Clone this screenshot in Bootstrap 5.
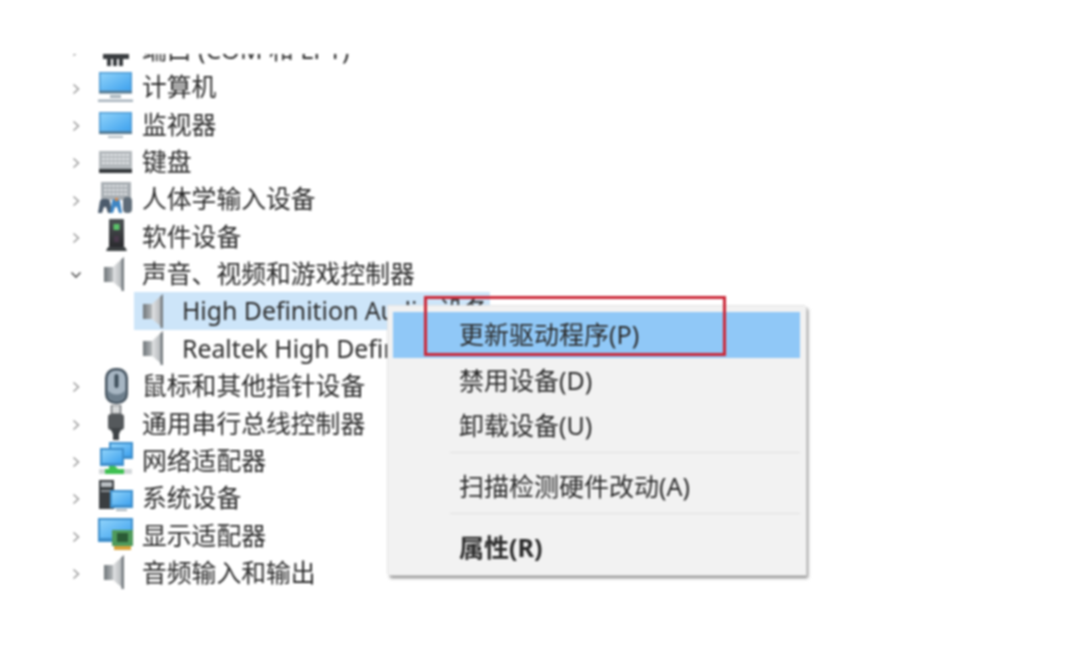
<!DOCTYPE html>
<html lang="zh-CN">
<head>
    <meta charset="UTF-8">
    <title>设备管理器</title>
    <link href="https://cdn.jsdelivr.net/npm/bootstrap@5.3.3/dist/css/bootstrap.min.css" rel="stylesheet">
    <style>
        body { background: #fff; color: #2b2b2b; font-family: "Noto Sans", "Noto Sans CJK SC", sans-serif; overflow: hidden; }
        .shot { width: 1080px; height: 647px; position: relative; overflow: hidden; filter: blur(0.8px); }
        .tree-clip { position: absolute; left: 0; top: 54px; width: 1080px; height: 560px; overflow: hidden; }
        .tree-list { margin-top: -23px; padding-left: 70px; }
        .tree-row { height: 37.35px; font-size: 24.8px; white-space: nowrap; }
        .tree-row.child { padding-left: 64px; }
        .row-inner { height: 100%; width: 356px; overflow: visible; }
        .row-inner.picked { background: #cde5f9; }
        .chev { width: 12px; height: 12px; flex: none; margin-right: 16px; margin-top: 3px; }
        .tree-icon { width: 36px; height: 36px; flex: none; margin-right: 8px; }
        .child .tree-icon { margin-left: 3px; margin-right: 9px; }
        .ctx-menu { position: absolute; left: 388px; top: 306px; width: 418px; height: 269px; background: #f2f2f2; box-shadow: -1px -1px 0 #e4e4e4, 1px 1px 0 #ccc, 2px 3px 3px #888; padding: 6px 6px 6px 5px; font-size: 25px; color: #2b2b2b; }
        .ctx-item { height: 45.5px; padding-left: 66px; }
        .ctx-item.hot { background: #90c8f7; }
        .ctx-sep { height: 1px; background: #e0e0e0; margin: 3.5px 0 11px 57px; }
        .ctx-bold { font-weight: 700; }
        .red-box { position: absolute; left: 424px; top: 296px; width: 302px; height: 60px; border: 3px solid #cb2838; }
    </style>
</head>
<body>
<div class="shot">
    <svg width="0" height="0" class="position-absolute">
        <defs>
            <linearGradient id="g-screen" x1="0" y1="0" x2="1" y2="1"><stop offset="0" stop-color="#8ed2fa"/><stop offset="1" stop-color="#3fa2ee"/></linearGradient>
            <linearGradient id="g-cone" x1="0" y1="0" x2="1" y2="0"><stop offset="0" stop-color="#e2e4e5"/><stop offset="1" stop-color="#a9adb0"/></linearGradient>
            <linearGradient id="g-box" x1="0" y1="0" x2="1" y2="0"><stop offset="0" stop-color="#6f7579"/><stop offset="1" stop-color="#b5b9bb"/></linearGradient>
            <linearGradient id="g-tower" x1="0" y1="0" x2="0" y2="1"><stop offset="0" stop-color="#4c5254"/><stop offset="1" stop-color="#2a2a2e"/></linearGradient>
            <symbol id="i-port" viewBox="0 0 36 36">
                <path d="M5 19h26v8h-6v7h-4v-7h-2v7h-4v-7h-2v7h-4v-7h-4z" fill="#3a3d40"/>
            </symbol>
            <symbol id="i-pc" viewBox="0 0 36 36">
                <rect x="1" y="3" width="33" height="21" fill="#4f9ad2"/>
                <rect x="2.500" y="4.500" width="30" height="17" fill="url(#g-screen)"/>
                <rect x="1" y="22" width="33" height="2.500" fill="#52768e"/>
                <rect x="12" y="26" width="11" height="3" fill="#a8b4bc"/>
                <rect x="0" y="30.500" width="35" height="2.500" fill="#a6b2bb"/>
            </symbol>
            <symbol id="i-monitor" viewBox="0 0 36 36">
                <rect x="1" y="6" width="33" height="22" fill="#4f9ad2"/>
                <rect x="2.500" y="7.500" width="30" height="17.500" fill="url(#g-screen)"/>
                <rect x="1" y="25.500" width="33" height="2.500" fill="#52768e"/>
                <rect x="10" y="30" width="15" height="1.800" fill="#a8b4bc"/>
            </symbol>
            <symbol id="i-kbd" viewBox="0 0 36 36">
                <rect x="1" y="7" width="33" height="22" fill="#b3b8bc"/>
                <path d="M4 11h27M4 15h27M4 19h27" stroke="#e3e6e8" stroke-width="2" stroke-dasharray="3 1"/>
                <rect x="1" y="25" width="33" height="4" fill="#34383b"/>
            </symbol>
            <symbol id="i-hid" viewBox="0 0 36 36">
                <rect x="3" y="1" width="30" height="18" fill="#a9afb4"/>
                <path d="M6 5h24M6 9h24M6 13h24" stroke="#dfe2e4" stroke-width="2" stroke-dasharray="3 1"/>
                <path d="M0 32l2-12c1-3 9-3 10 0l2 12h-4l-2-6H6l-2 6z" fill="#4c5b6c"/>
                <path d="M12 32l2-12c1-3 7-3 8 0l2 12h-3l-2-6h-2l-2 6z" fill="#3f86c4"/>
                <rect x="17" y="17" width="3" height="3" fill="#d98a4a"/>
                <rect x="25" y="16" width="9" height="16" rx="4" fill="#5f6c78"/>
            </symbol>
            <symbol id="i-soft" viewBox="0 0 36 36">
                <rect x="11" y="1" width="15" height="28" rx="1" fill="url(#g-tower)"/>
                <rect x="15.500" y="6" width="6" height="6" fill="#5cc26a"/>
                <rect x="16" y="18" width="5" height="6" fill="#4a3a4c"/>
                <path d="M10 29h17l2 4H8z" fill="#3c4042"/>
            </symbol>
            <symbol id="i-spk" viewBox="0 0 36 36">
                <rect x="6" y="11" width="9" height="15" fill="url(#g-box)"/>
                <path d="M15 11L26 1v34L15 26z" fill="url(#g-cone)"/>
                <path d="M26 1v34h-2.500V3.500z" fill="#777d81"/>
            </symbol>
            <symbol id="i-mouse" viewBox="0 0 36 36">
                <rect x="7" y="0" width="23" height="36" rx="10" fill="#44525e"/>
                <rect x="9.500" y="2.500" width="18" height="31" rx="8" fill="#a7b6c3"/>
                <path d="M9.500 22c5 6 13 6 18 0v3a9 9 0 0 1-18 0z" fill="#6e7f8d"/>
                <rect x="16.500" y="6" width="4" height="14" rx="2" fill="#3f4e5a"/>
            </symbol>
            <symbol id="i-usb" viewBox="0 0 36 36">
                <rect x="13.500" y="0" width="9" height="9" fill="#d8dadb" stroke="#6a6e71" stroke-width="1.500"/>
                <rect x="10" y="9" width="16" height="16" rx="3" fill="#55595c"/>
                <path d="M12 23h12l-3 6v6h-6v-6z" fill="#3f4346"/>
            </symbol>
            <symbol id="i-net" viewBox="0 0 36 36">
                <rect x="11" y="0" width="24" height="17" fill="#3e8fcc"/>
                <rect x="13" y="2" width="20" height="12" fill="url(#g-screen)"/>
                <rect x="2" y="6" width="24" height="18" fill="#3e8fcc"/>
                <rect x="4" y="8" width="20" height="13" fill="url(#g-screen)"/>
                <rect x="1" y="27" width="33" height="5" fill="#d4d8da"/>
                <path d="M11 24h6l3 3h6v5H7v-5h4z" fill="#3fc052"/>
            </symbol>
            <symbol id="i-sys" viewBox="0 0 36 36">
                <rect x="1" y="0" width="15" height="29" fill="#3a3e41"/>
                <rect x="3" y="2" width="11" height="5" fill="#b9bec2"/>
                <rect x="3" y="10" width="11" height="2" fill="#8d9296"/>
                <rect x="12" y="10" width="23" height="18" fill="#3e8fcc"/>
                <rect x="14" y="12" width="19" height="13" fill="url(#g-screen)"/>
                <rect x="18" y="29" width="11" height="2" fill="#a8b4bc"/>
            </symbol>
            <symbol id="i-gpu" viewBox="0 0 36 36">
                <rect x="0" y="1" width="35" height="24" fill="#3e8fcc"/>
                <rect x="2" y="3" width="31" height="18" fill="url(#g-screen)"/>
                <rect x="14" y="13" width="21" height="16" fill="#4f9a5c"/>
                <rect x="19" y="16" width="11" height="9" fill="#2b5b36"/>
                <rect x="16" y="29" width="17" height="4" fill="#d9a43c"/>
            </symbol>
            <symbol id="i-chev" viewBox="0 0 12 12"><path d="M3.500 1.500l5 4.500-5 4.500" fill="none" stroke="#9a9a9a" stroke-width="1.500"/></symbol>
            <symbol id="i-chevd" viewBox="0 0 12 12"><path d="M1.500 3.500l4.500 4.500 4.500-4.500" fill="none" stroke="#555" stroke-width="1.600"/></symbol>
        </defs>
    </svg>

    <div class="tree-clip">
        <div class="tree-list" id="tree"></div>
    </div>

    <div class="ctx-menu">
        <div class="ctx-item hot d-flex align-items-center">更新驱动程序(P)</div>
        <div class="ctx-item d-flex align-items-center">禁用设备(D)</div>
        <div class="ctx-item d-flex align-items-center">卸载设备(U)</div>
        <div class="ctx-sep"></div>
        <div class="ctx-item d-flex align-items-center">扫描检测硬件改动(A)</div>
        <div class="ctx-sep"></div>
        <div class="ctx-item ctx-bold d-flex align-items-center">属性(R)</div>
    </div>
    <div class="red-box"></div>
</div>

<script>
    // rows of the device tree
    const rows = [
        { icon: 'i-port', name: '端口 (COM 和 LPT)' },
        { icon: 'i-pc', name: '计算机' },
        { icon: 'i-monitor', name: '监视器' },
        { icon: 'i-kbd', name: '键盘' },
        { icon: 'i-hid', name: '人体学输入设备' },
        { icon: 'i-soft', name: '软件设备' },
        { icon: 'i-spk', name: '声音、视频和游戏控制器', open: true },
        { icon: 'i-spk', name: 'High Definition Audio 设备', child: true, picked: true },
        { icon: 'i-spk', name: 'Realtek High Definition Audio', child: true },
        { icon: 'i-mouse', name: '鼠标和其他指针设备' },
        { icon: 'i-usb', name: '通用串行总线控制器' },
        { icon: 'i-net', name: '网络适配器' },
        { icon: 'i-sys', name: '系统设备' },
        { icon: 'i-gpu', name: '显示适配器' },
        { icon: 'i-spk', name: '音频输入和输出' }
    ];

    document.getElementById('tree').innerHTML = rows.map(r => {
        if (r.child) {
            return `<div class="tree-row child d-flex align-items-center"><div class="row-inner d-flex align-items-center ${r.picked ? 'picked' : ''}"><svg class="tree-icon"><use href="#${r.icon}"/></svg><span>${r.name}</span></div></div>`;
        }
        return `<div class="tree-row d-flex align-items-center"><svg class="chev"><use href="#${r.open ? 'i-chevd' : 'i-chev'}"/></svg><svg class="tree-icon"><use href="#${r.icon}"/></svg><span>${r.name}</span></div>`;
    }).join('');
</script>
<script src="https://cdn.jsdelivr.net/npm/bootstrap@5.3.3/dist/js/bootstrap.bundle.min.js"></script>
</body>
</html>
